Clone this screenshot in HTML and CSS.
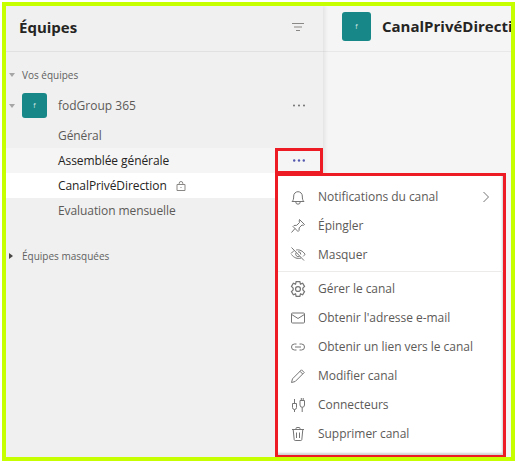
FILE: index.html
```html
<!DOCTYPE html>
<html lang="fr">
<head>
    <meta charset="UTF-8">
    <title>Équipes</title>
    <link rel="stylesheet" href="styles.css">
</head>
<body>
    <div class="frame">
        <aside class="sidebar">
            <header class="side-head">
                <h1>Équipes</h1>
                <svg class="filter-icon" width="14" height="10" viewBox="0 0 14 10"><path d="M1 1.500h12M3 5h8M5 8.500h4" /></svg>
            </header>

            <div class="section-label"><span class="caret-down"></span>Vos équipes</div>

            <div class="team-row">
                <span class="caret-down"></span>
                <span class="avatar">f</span>
                <span class="team-name">fodGroup 365</span>
                <svg class="dots" width="12" height="3" viewBox="0 0 12 3"><circle cx="1" cy="1.500" r="0.900" /><circle cx="6" cy="1.500" r="0.900" /><circle cx="11" cy="1.500" r="0.900" /></svg>
            </div>

            <div class="channel">Général</div>
            <div class="channel hover">Assemblée générale
                <svg class="dots active" width="12" height="3" viewBox="0 0 12 3"><circle cx="1.200" cy="1.500" r="1.200" /><circle cx="6" cy="1.500" r="1.200" /><circle cx="10.800" cy="1.500" r="1.200" /></svg>
            </div>
            <div class="channel selected">CanalPrivéDirection
                <svg class="lock" width="10" height="10" viewBox="0 0 10 10"><path d="M1 3.500h8v6h-8zM3.200 3.500V2.300a1.800 1.800 0 0 1 3.600 0v1.200M4.500 6.500h1" /></svg>
            </div>
            <div class="channel">Evaluation mensuelle</div>

            <div class="section-label hidden-teams"><span class="caret-right"></span>Équipes masquées</div>
        </aside>

        <main class="main">
            <header class="main-head">
                <span class="avatar big">f</span>
                <h2>CanalPrivéDirection</h2>
            </header>
        </main>

        <div class="mark-dots"></div>

        <div class="menu">
            <div class="menu-group first">
                <div class="menu-item">
                    <svg width="16" height="16" viewBox="0 0 16 16"><path d="M2 12.500c1.300-1 1.700-2.500 1.700-5.500a4.300 4.300 0 0 1 8.600 0c0 3 .4 4.500 1.700 5.500zM5.800 12.500v.5a2.200 2.200 0 0 0 4.400 0v-.5" /></svg>
                    <span>Notifications du canal</span>
                    <svg class="chevron" width="8" height="12" viewBox="0 0 8 12"><path d="M1.500 1l5 5-5 5" /></svg>
                </div>
                <div class="menu-item">
                    <svg width="16" height="16" viewBox="0 0 16 16"><path d="M9.500 1.500l5 5-1 .8-1.500-.3-2.800 2.800-.2 2.700-1 1-5-5 1-1 2.700-.2 2.800-2.800-.3-1.500zM5 10.500l-3.500 4" /></svg>
                    <span>Épingler</span>
                </div>
                <div class="menu-item">
                    <svg width="16" height="16" viewBox="0 0 16 16"><path d="M1.500 1.500l12.500 13M1 7.500c.8-1 1.700-1.900 2.800-2.500M6.200 4C9.500 3.300 12.800 5 15 8.200c-.5.900-1.100 1.600-1.800 2.200M11 12c-3.300 1.300-7.300-.3-9.500-3.500M6 6.800a2.700 2.700 0 0 0 3.500 3.700M8 5.700a2.700 2.700 0 0 1 2.800 2.800" /></svg>
                    <span>Masquer</span>
                </div>
            </div>
            <div class="menu-group">
                <div class="menu-item">
                    <svg width="16" height="16" viewBox="1.500 1 13 13"><path d="M6.500 1.500h3l.5 2 1.800-.7 1.500 2.600-1.400 1.400.1.700-.1.700 1.400 1.400-1.500 2.600-1.800-.7-.5 2h-3l-.5-2-1.800.7-1.500-2.600 1.400-1.400-.1-.7.1-.7-1.400-1.400 1.500-2.600 1.800.7z" /><circle cx="8" cy="7.500" r="2" /></svg>
                    <span>Gérer le canal</span>
                </div>
                <div class="menu-item">
                    <svg width="16" height="16" viewBox="0 0 16 16"><path d="M2.500 3h11a1 1 0 0 1 1 1v8a1 1 0 0 1-1 1h-11a1 1 0 0 1-1-1V4a1 1 0 0 1 1-1zM1.700 4.500L8 8.500l6.300-4" /></svg>
                    <span>Obtenir l'adresse e-mail</span>
                </div>
                <div class="menu-item">
                    <svg width="16" height="16" viewBox="0 0 16 16"><path d="M6.500 5H4.500a3 3 0 0 0 0 6h2M9.500 5h2a3 3 0 0 1 0 6h-2M5 8h6" /></svg>
                    <span>Obtenir un lien vers le canal</span>
                </div>
                <div class="menu-item">
                    <svg width="16" height="16" viewBox="0 0 16 16"><path d="M11.500 1.800l2.700 2.700-9 9-3.700 1 1-3.700zM10 3.300l2.700 2.700" /></svg>
                    <span>Modifier canal</span>
                </div>
                <div class="menu-item">
                    <svg width="16" height="16" viewBox="0 0 16 16"><path d="M2.500 6.500h4v4a2 2 0 0 1-4 0zM4.500 2v4.500M4.500 12.500V15M10 3.500h4.500v4.500a2.200 2.200 0 0 1-4.500 0zM11.300 3.500V1M13.200 3.500V1M12.200 10.200V15" /></svg>
                    <span>Connecteurs</span>
                </div>
                <div class="menu-item">
                    <svg width="16" height="16" viewBox="0 0 16 16"><path d="M2 3.500h12M3.200 3.500l1 10.200a1 1 0 0 0 1 .8h5.600a1 1 0 0 0 1-.8l1-10.200M6 3.500V2.500a1 1 0 0 1 1-1h2a1 1 0 0 1 1 1v1M6.500 6.500v5.500M9.500 6.500v5.500" /></svg>
                    <span>Supprimer canal</span>
                </div>
            </div>
        </div>
    </div>
</body>
</html>
```

FILE: styles.css
```css
html, body {
    margin: 0;
    padding: 0;
    background: #fff;
}

body {
    width: 517px;
    height: 464px;
    padding: 2px;
    box-sizing: border-box;
    overflow: hidden;
    font-family: 'Open Sans', 'Noto Sans', sans-serif;
    color: #5c5a58;
}

.frame {
    position: relative;
    display: flex;
    width: 513px;
    height: 459px;
    box-sizing: border-box;
    border: 4px solid #c6ff00;
    overflow: hidden;
}

.sidebar {
    width: 317px;
    flex-shrink: 0;
    background: #f0f0f0;
    font-size: 12px;
    box-shadow: 2px 0 4px rgba(0, 0, 0, 0.08);
    z-index: 1;
}

.side-head {
    display: flex;
    align-items: center;
    justify-content: space-between;
    height: 46px;
    box-sizing: border-box;
    padding: 0 18px 4px 13px;
    border-bottom: 1px solid #e1e1e1;
}

.side-head h1 {
    margin: 0;
    font-size: 15px;
    font-weight: 700;
    color: #252423;
}

.filter-icon path,
.lock path {
    fill: none;
    stroke: #8a8886;
    stroke-width: 1;
}

.section-label {
    display: flex;
    align-items: center;
    height: 18px;
    margin-top: 14px;
    padding-left: 3px;
    font-size: 10px;
    color: #616161;
}

.caret-down {
    width: 0;
    height: 0;
    margin-right: 7px;
    border-left: 3px solid transparent;
    border-right: 3px solid transparent;
    border-top: 4px solid #a6a6a6;
}

.caret-right {
    width: 0;
    height: 0;
    margin-right: 9px;
    border-top: 3px solid transparent;
    border-bottom: 3px solid transparent;
    border-left: 4px solid #484644;
}

.team-row {
    display: flex;
    align-items: center;
    height: 25px;
    margin-top: 9px;
    padding: 0 18px 0 3px;
}

.team-name {
    flex: 1;
    margin-left: 11px;
}

.avatar {
    display: flex;
    align-items: center;
    justify-content: center;
    flex-shrink: 0;
    width: 25px;
    height: 25px;
    border-radius: 3px;
    background: #178787;
    color: #cfe6e6;
    font-size: 7px;
}

.avatar.big {
    width: 29px;
    height: 29px;
}

.dots circle {
    fill: #616161;
}

.channel {
    display: flex;
    align-items: center;
    height: 25px;
    padding-left: 52px;
    letter-spacing: -0.08px;
}

.team-row + .channel {
    margin-top: 5px;
}

.channel.hover {
    position: relative;
    background: #f5f5f5;
    color: #252423;
}

.channel.selected {
    background: #fff;
    color: #252423;
}

.channel .active {
    position: absolute;
    left: 287px;
}

.channel .active circle {
    fill: #5558af;
}

.lock {
    margin-left: 9px;
}

.hidden-teams {
    margin-top: 24px;
}

.main {
    flex: 1;
    background: #f5f5f5;
}

.main-head {
    display: flex;
    align-items: center;
    gap: 11px;
    height: 46px;
    box-sizing: border-box;
    padding: 0 0 5px 19px;
    border-bottom: 1px solid #e8e8e8;
    white-space: nowrap;
}

.main-head h2 {
    margin: 0;
    font-size: 15px;
    font-weight: 700;
    color: #252423;
}

/* red marks drawn over the screenshot */
.mark-dots {
    position: absolute;
    z-index: 2;
    left: 269px;
    top: 142px;
    width: 48px;
    height: 26px;
    box-sizing: border-box;
    border: 3px solid #ed1c24;
}

.menu {
    position: absolute;
    z-index: 3;
    left: 269px;
    top: 167px;
    width: 231px;
    height: 285px;
    box-sizing: border-box;
    border: 3px solid #ed1c24;
    background: #fff;
    box-shadow: inset -1px -2px 2px rgba(0, 0, 0, 0.18);
    font-size: 12px;
    letter-spacing: -0.04px;
}

.menu-group {
    padding: 2.500px 0;
}

.menu-group.first {
    padding: 6.500px 0 2px;
}

.menu-group + .menu-group {
    border-top: 1px solid #edebe9;
}

.menu-item {
    display: flex;
    align-items: center;
    height: 29px;
    padding-left: 12px;
}

.first .menu-item {
    height: 28.700px;
}

.menu-item > span {
    flex: 1;
    margin-left: 12px;
}

.menu-item svg path,
.menu-item svg circle {
    fill: none;
    stroke: #757575;
    stroke-width: 1;
}

.chevron {
    margin-right: 13px;
}
```
